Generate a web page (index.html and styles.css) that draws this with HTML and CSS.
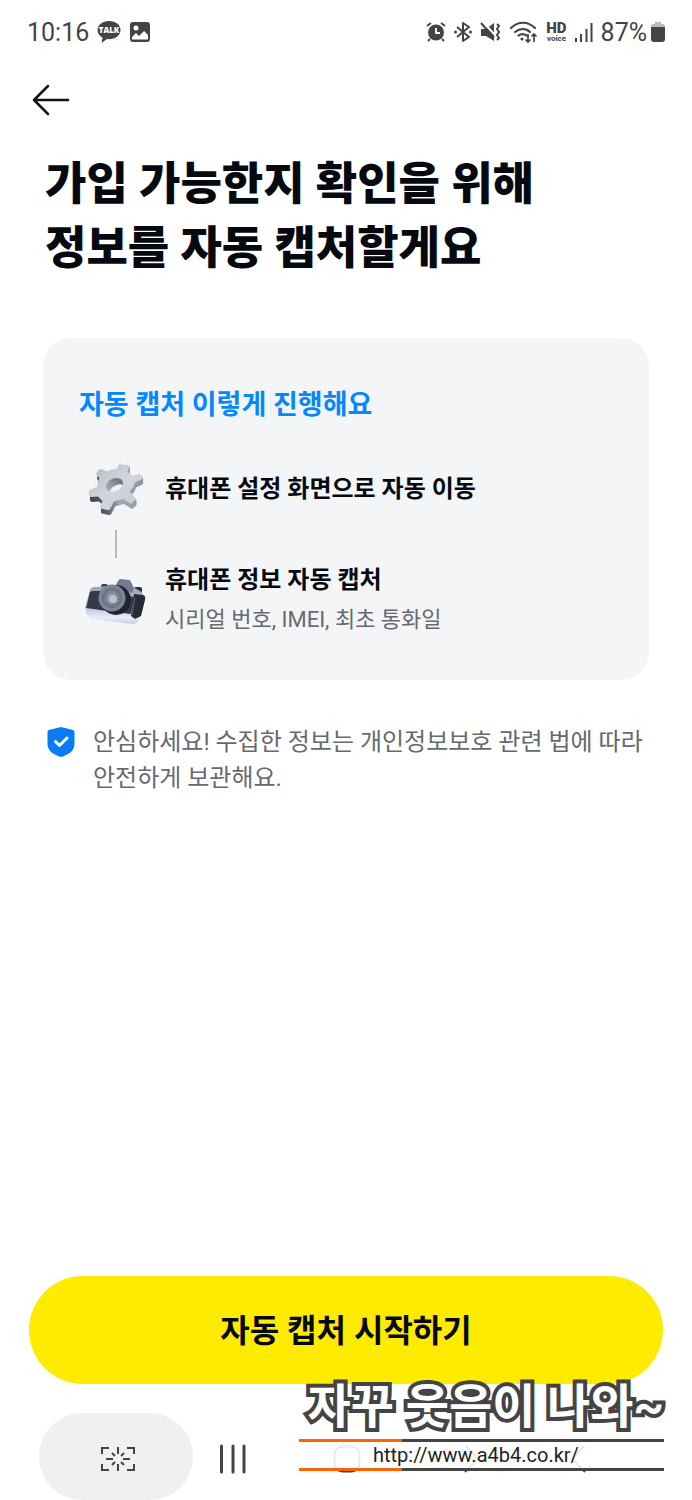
FILE: index.html
```html
<!DOCTYPE html>
<html lang="ko">

<head>
    <meta charset="UTF-8">
    <meta name="viewport" content="width=device-width, initial-scale=1.0">
    <title>자동 캡처</title>
    <link rel="stylesheet" href="styles.css">
</head>

<body>
    <div class="status-bar">
        <div class="status-left">
            <span class="clock">10:16</span>
            <svg width="24" height="24" viewBox="0 0 24 24">
                <path d="M12 1C5.400 1 .5 5 .5 10c0 3.300 2.100 6.100 5 7.700L4.500 23l5.500-4 2 .2c6.600 0 11.500-4 11.500-9.200S18.600 1 12 1z" fill="#444" />
                <text class="talk-text" x="12" y="13" text-anchor="middle">TALK</text>
            </svg>
            <svg width="22" height="22" viewBox="0 0 22 22">
                <rect x="1" y="1" width="20" height="20" rx="3" fill="#444" />
                <circle cx="7" cy="7" r="2.500" fill="#fff" />
                <path d="M3 16l4-4 3 3 5-5 4 4v4.500H3z" fill="#fff" />
            </svg>
        </div>
        <div class="status-right">
            <svg width="20" height="22" viewBox="0 0 20 22">
                <circle cx="10" cy="11.500" r="8" fill="#444" />
                <path d="M1 5l4-3M19 5l-4-3M4 18l-2 2M16 18l2 2" stroke="#444" stroke-width="2" />
                <path d="M10 7v5h4" stroke="#fff" stroke-width="1.800" fill="none" />
            </svg>
            <svg width="20" height="22" viewBox="0 0 20 22">
                <path d="M4 6l12 10-6 4V2l6 4L4 16" stroke="#444" stroke-width="2" fill="none" stroke-linejoin="round" />
                <circle cx="2.500" cy="11" r="1.500" fill="#444" />
                <circle cx="17.500" cy="11" r="1.500" fill="#444" />
            </svg>
            <svg width="22" height="22" viewBox="0 0 22 22">
                <path d="M1 8h5l8-6v18l-8-5H1z" fill="#444" />
                <path d="M2 0l14 15" stroke="#fff" stroke-width="2" />
                <path d="M1 2l13 15" stroke="#444" stroke-width="2" />
                <path d="M17 3l2 2-2 3 2 3-2 3 2 3-2 2" stroke="#444" stroke-width="2" fill="none" />
            </svg>
            <svg width="30" height="24" viewBox="0 0 30 24">
                <path d="M2 8c7-7 17-7 24 0M6 12c5-4 11-4 15 0M9.500 15.500c3-2 5-2 8 0" stroke="#444" stroke-width="2.200" fill="none" stroke-linecap="round" />
                <circle cx="13" cy="19" r="1.600" fill="#444" />
                <path d="M19 14v8M16.500 19.500l2.500 2.500 2.500-2.500M25 22v-8M22.500 16.500L25 14l2.500 2.500" stroke="#444" stroke-width="1.700" fill="none" />
            </svg>
            <span class="hd-voice"><b>HD</b><small>voice</small></span>
            <svg width="20" height="22" viewBox="0 0 20 22">
                <path d="M2 17v4M7 13v8M12.500 8v13M17.500 2v19" stroke="#444" stroke-width="2" />
            </svg>
            <span class="battery">87%
                <svg width="14" height="22" viewBox="0 0 14 22">
                    <path d="M4 1h6v2h2a2 2 0 0 1 2 2v2H0V5a2 2 0 0 1 2-2h2z" fill="#bbb" />
                    <path d="M0 6h14v12a3 3 0 0 1-3 3H3a3 3 0 0 1-3-3z" fill="#444" />
                </svg>
            </span>
        </div>
    </div>

    <header class="top-bar">
        <button type="button" class="back-btn" aria-label="뒤로">
            <svg width="38" height="32" viewBox="0 0 38 32">
                <path d="M36 16H2M16 2L2 16l14 14" />
            </svg>
        </button>
    </header>

    <main class="content">
        <h1>가입 가능한지 확인을 위해<br>정보를 자동 캡처할게요</h1>

        <section class="card">
            <h2>자동 캡처 이렇게 진행해요</h2>
            <div class="step">
                <svg class="step-icon" width="60" height="58" viewBox="0 0 60 58">
                    <defs>
                        <linearGradient id="metal" x1="0" y1="0" x2="1" y2="1">
                            <stop offset="0" stop-color="#b4b8c0" />
                            <stop offset=".5" stop-color="#d3d6dc" />
                            <stop offset="1" stop-color="#c3c6cd" />
                        </linearGradient>
                        <linearGradient id="metalSide" x1="0" y1="0" x2="1" y2="0">
                            <stop offset="0" stop-color="#3d4352" />
                            <stop offset=".35" stop-color="#5c6270" />
                            <stop offset=".55" stop-color="#a5abb6" />
                            <stop offset="1" stop-color="#8b929e" />
                        </linearGradient>
                        <linearGradient id="hole" x1="0" y1="1" x2="1" y2="0">
                            <stop offset="0" stop-color="#c2c6ce" />
                            <stop offset=".5" stop-color="#8d939f" />
                            <stop offset="1" stop-color="#3f4554" />
                        </linearGradient>
                        <path id="gear" d="M35 4.500l7.500.5q1 .5.500 2L41.500 12l5 3.500 7.500-1.500q1.500 0 2 2.500t-.5 3L49 22.500l-1.500 4.500-4 4 6 7.500q.5 1-1 2.500l-3.500 3-8-5-9 2.500-3.500 7q-1 2-3 1.500l-6.500-1.500q-1.500-.5-1-2l2.500-5.500-4.500-4.500-7 .5q-1.500 0-2-2L3 32q-.5-1.500 1-2l7-3 .5-4.500 2-4.500-3-3q-.5-1 0-2l2-3q1-1.500 2.500-1l6 2.500 4.500-2 5-.5 2.500-4.500q.5-1 2-1z" />
                        <clipPath id="holeClip">
                            <ellipse cx="28.500" cy="25" rx="9" ry="6.500" transform="rotate(-25 28.500 25)" />
                        </clipPath>
                    </defs>
                    <g fill="url(#metalSide)">
                        <use href="#gear" x="1" y="5" />
                        <use href="#gear" x="1" y="4" />
                        <use href="#gear" x="1" y="2" />
                    </g>
                    <use href="#gear" fill="url(#metal)" />
                    <g clip-path="url(#holeClip)">
                        <rect x="16" y="14" width="26" height="22" fill="url(#hole)" />
                        <ellipse cx="32" cy="31" rx="9" ry="6" transform="rotate(-25 32 31)" fill="#eef0f3" />
                    </g>
                </svg>
                <strong>휴대폰 설정 화면으로 자동 이동</strong>
            </div>
            <div class="step-line"></div>
            <div class="step">
                <svg class="step-icon" width="62" height="54" viewBox="0 -2 62 54">
                    <defs>
                        <linearGradient id="body" x1="0" y1="0" x2="0" y2="1">
                            <stop offset="0" stop-color="#9299ae" />
                            <stop offset=".65" stop-color="#c6cbdb" />
                            <stop offset=".85" stop-color="#e9ecf7" />
                            <stop offset="1" stop-color="#c9cddd" />
                        </linearGradient>
                        <radialGradient id="lens">
                            <stop offset="0" stop-color="#a7acb5" />
                            <stop offset=".5" stop-color="#888e99" />
                            <stop offset="1" stop-color="#636a78" />
                        </radialGradient>
                    </defs>
                    <rect x="16" y="9" width="7" height="6" rx="2" fill="#3d4353" />
                    <rect x="49" y="12" width="8" height="6" rx="2" fill="#292e3b" />
                    <path d="M5 15q1-3 5-3l20-1 3-4h11l4 5 7 4q4 2 3 6l-3 21q-2 6-8 6L7 44q-5-2-6-7l-1-5z" fill="url(#body)" />
                    <path d="M31 10l2-4q1-2 3-2l8 1q1 0 2 2l3 6-2 5-12-5z" fill="#737a90" />
                    <path d="M5 17q1-1 4-1h10l30 6-3 17-17-2-28-4z" fill="#343a4a" />
                    <path d="M49 19l9 1q3 1 2 5l-4 16-6 3-4-3z" fill="#262b38" />
                    <path d="M50 22l-3 18" stroke="#596074" fill="none" />
                    <ellipse cx="31" cy="25" rx="15" ry="15" fill="#1e2430" />
                    <circle cx="27" cy="23" r="13.500" fill="#7d8498" />
                    <circle cx="27" cy="23" r="10" fill="url(#lens)" />
                    <circle cx="28" cy="24" r="4" fill="#bcc0c7" />
                </svg>
                <div class="step-text">
                    <strong>휴대폰 정보 자동 캡처</strong>
                    <p>시리얼 번호, IMEI, 최초 통화일</p>
                </div>
            </div>
        </section>

        <div class="notice">
            <svg width="28" height="32" viewBox="0 0 28 32">
                <path d="M14 1l12 3q1.500.5 1.500 2v12c0 7-6.500 11-13.500 13C7 29 .5 25 .5 18V6q0-1.500 1.500-2z" fill="#067df7" />
                <path d="M8.500 15.500l4 4 7.500-7.500" stroke="#fff" stroke-width="3" fill="none" stroke-linecap="round" stroke-linejoin="round" />
            </svg>
            <p>안심하세요! 수집한 정보는 개인정보보호 관련 법에 따라 안전하게 보관해요.</p>
        </div>
    </main>

    <footer class="bottom">
        <button type="button" class="start-btn">자동 캡처 시작하기</button>
        <nav class="nav-bar">
            <button type="button" class="capture-btn" aria-label="화면 캡처">
                <svg width="36" height="26" viewBox="0 0 36 26">
                    <path d="M2 8V2h7M27 2h7v6M34 18v6h-7M9 24H2v-6M18 1v7M18 18v7M6 13h7M23 13h7M12 7l3 3M24 7l-3 3M12 19l3-3M24 19l-3-3" />
                </svg>
            </button>
            <button type="button" class="recent-btn" aria-label="최근 앱">
                <svg width="28" height="30" viewBox="0 0 28 30">
                    <path d="M2.500 2v26M14 2v26M25 2v26" stroke-width="3" stroke-linecap="round" />
                </svg>
            </button>
            <button type="button" class="home-btn" aria-label="홈">
                <svg width="28" height="28" viewBox="0 0 28 28">
                    <rect x="1.500" y="1.500" width="25" height="25" rx="8" />
                </svg>
            </button>
            <button type="button" class="next-btn" aria-label="다음">
                <svg width="16" height="28" viewBox="0 0 16 28">
                    <path d="M2 1l12 13L1 27" />
                </svg>
            </button>
            <button type="button" class="prev-btn" aria-label="이전">
                <svg width="16" height="28" viewBox="0 0 16 28">
                    <path d="M14 1L2 14l13 13" />
                </svg>
            </button>
        </nav>

        <div class="signature">
            <div class="signature-name">자꾸 웃음이 나와~</div>
            <a class="signature-link" href="http://www.a4b4.co.kr/">http://www.a4b4.co.kr/</a>
        </div>
    </footer>
</body>

</html>
```

FILE: styles.css
```css
* {
    box-sizing: border-box;
}

body {
    font-family: Roboto, "Noto Sans CJK KR", sans-serif;
    background-color: #fff;
    color: #060a10;
    display: flex;
    flex-direction: column;
    min-height: 100vh;
    margin: 0;
    word-break: keep-all;
}

h1,
h2,
p {
    margin: 0;
}

svg {
    display: block;
    flex-shrink: 0;
}

button {
    background: none;
    border: none;
    padding: 0;
    cursor: pointer;
    font-family: inherit;
    color: inherit;
}

.status-bar {
    display: flex;
    justify-content: space-between;
    align-items: center;
    height: 64px;
    padding: 0 27px;
    color: #444;
    font-size: 25px;
}

.status-left,
.status-right,
.battery {
    display: flex;
    align-items: center;
}

.status-left {
    gap: 8px;
}

.status-right {
    gap: 7px;
}

.battery {
    gap: 4px;
}

.talk-text {
    font-family: "Open Sans", sans-serif;
    font-size: 8px;
    font-weight: 800;
    fill: #fff;
}

.hd-voice {
    display: flex;
    flex-direction: column;
    align-items: center;
    font-weight: bold;
}

.hd-voice b {
    font-size: 15px;
    line-height: 14px;
}

.hd-voice small {
    font-size: 8px;
    line-height: 8px;
}

.top-bar {
    display: flex;
    padding: 20px 32px 37px;
}

.back-btn path {
    fill: none;
    stroke: #10141b;
    stroke-width: 2.5;
    stroke-linecap: round;
    stroke-linejoin: round;
}

.content {
    flex: 1;
    padding: 0 43px 40px;
}

h1 {
    padding-left: 2px;
    font-size: 45px;
    font-weight: 900;
    line-height: 64px;
}

.card {
    margin-top: 57px;
    padding: 49px 36px 42px;
    background-color: #f3f5f7;
    border-radius: 28px;
}

h2 {
    margin-bottom: 37px;
    color: #0588fd;
    font-size: 27px;
    font-weight: 700;
    line-height: 36px;
}

.step {
    display: grid;
    grid-template-columns: 74px 1fr;
    column-gap: 12px;
    align-items: center;
}

.step-icon {
    justify-self: center;
}

.step strong {
    display: block;
    font-size: 24px;
    font-weight: 700;
    line-height: 36px;
}

.step p {
    margin-top: 4px;
    color: #676a70;
    font-size: 22px;
    line-height: 36px;
}

.step-line {
    width: 2px;
    height: 28px;
    margin: 12px 36px 4px;
    background-color: #b5bac1;
}

.notice {
    display: flex;
    gap: 18px;
    margin-top: 44px;
    padding-left: 4px;
    color: #66696f;
    font-size: 24px;
    line-height: 36px;
}

.notice svg {
    margin-top: 2px;
}

.bottom {
    position: relative;
}

.start-btn {
    display: block;
    width: calc(100% - 58px);
    height: 108px;
    margin: 0 29px 29px;
    padding-bottom: 4px;
    background-color: #ffeb00;
    border-radius: 54px;
    font-size: 32px;
    font-weight: 700;
}

.nav-bar {
    display: flex;
    align-items: center;
    padding: 0 39px;
}

.nav-bar button {
    padding-top: 4px;
}

.nav-bar svg {
    fill: none;
    stroke: #444;
    stroke-width: 2;
}

.nav-bar .capture-btn {
    display: flex;
    justify-content: center;
    align-items: center;
    width: 154px;
    height: 87px;
    margin-right: 26px;
    padding-left: 4px;
    background-color: #f0f0f0;
    border-radius: 44px;
}

.home-btn {
    margin-left: 86px;
}

.next-btn {
    margin-left: 103px;
}

.prev-btn {
    margin-left: 90px;
}

/* signature lies over the button and the nav bar */
.signature {
    position: absolute;
    right: 28px;
    bottom: 29px;
    width: 365px;
}

.signature-name {
    color: #fff;
    font-size: 47px;
    font-weight: 700;
    line-height: 64px;
    text-align: right;
    white-space: nowrap;
    -webkit-text-stroke: 8px #444;
    paint-order: stroke fill;
    stroke-linejoin: round;
}

.signature-link {
    display: block;
    padding-left: 74px;
    border: solid #444;
    border-width: 3px 0;
    border-image: linear-gradient(to right, #ff6200 104px, #444 104px) 3;
    background-color: rgba(255, 255, 255, 0.88);
    color: #222;
    font-size: 20px;
    line-height: 26px;
    text-decoration: none;
}
```
